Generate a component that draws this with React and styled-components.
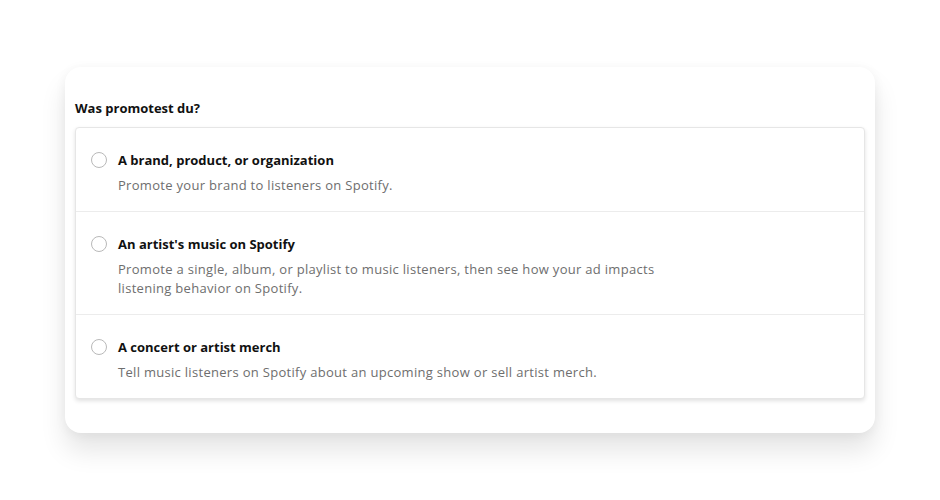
import React from 'react'
import styled, { createGlobalStyle } from 'styled-components'

const Global = createGlobalStyle`
  body {
    margin: 0;
    background: #ffffff;
    font-family: "Open Sans", "Noto Sans", sans-serif;
  }
`

const Pagina = styled.div`
  padding: 67px 65px 68px 65px;
`

const Cartao = styled.div`
  background: #ffffff;
  border-radius: 16px;
  padding: 33px 10px 34px 10px;
  box-shadow: 0 18px 26px rgba(0, 0, 0, 0.1), 0 2px 12px rgba(0, 0, 0, 0.05);
`

const Pergunta = styled.h2`
  margin: 0 0 10px 0;
  font-size: 13px;
  line-height: 17px;
  font-weight: 700;
  color: #111;
`

const Lista = styled.div`
  border: 1px solid #e6e6e6;
  border-radius: 4px;
  box-shadow: 0 2px 4px rgba(0, 0, 0, 0.12);
  background: #fff;
`

const Opcao = styled.label`
  display: grid;
  grid-template-columns: 16px 1fr;
  column-gap: 27px;
  padding: 22px 16px 16px 15px;
  border-top: ${(p) => (p.primeira ? 'none' : '1px solid #ececec')};
  cursor: pointer;
`

const Radio = styled.span`
  width: 14px;
  height: 14px;
  border: 1px solid #b9b9b9;
  border-radius: 50%;
  margin-top: 2px;
`

const Textos = styled.div`
  display: flex;
  flex-direction: column;
  gap: 6px;
  margin-left: -16px;
`

const Titulo = styled.div`
  font-size: 13px;
  line-height: 20px;
  font-weight: 700;
  color: #111;
`

const Descricao = styled.div`
  font-size: 13px;
  line-height: 19px;
  letter-spacing: 0.3px;
  color: #6e6e6e;
  max-width: 570px;
`

const opcoes = [
  {
    titulo: 'A brand, product, or organization',
    descricao: 'Promote your brand to listeners on Spotify.'
  },
  {
    titulo: "An artist's music on Spotify",
    descricao: 'Promote a single, album, or playlist to music listeners, then see how your ad impacts listening behavior on Spotify.'
  },
  {
    titulo: 'A concert or artist merch',
    descricao: 'Tell music listeners on Spotify about an upcoming show or sell artist merch.'
  }
]

function App() {
  return (
    <Pagina>
      <Global />
      <Cartao>
        <Pergunta>Was promotest du?</Pergunta>
        <Lista>
          {opcoes.map((o, i) => (
            <Opcao key={o.titulo} primeira={i === 0}>
              <Radio />
              <Textos>
                <Titulo>{o.titulo}</Titulo>
                <Descricao>{o.descricao}</Descricao>
              </Textos>
            </Opcao>
          ))}
        </Lista>
      </Cartao>
    </Pagina>
  )
}

export default App
